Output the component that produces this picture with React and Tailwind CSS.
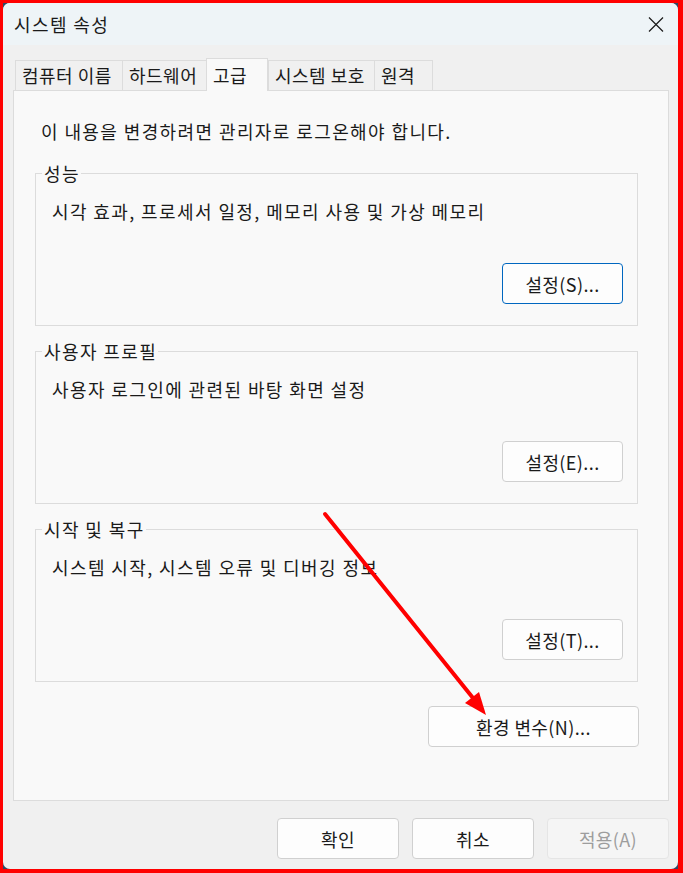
import React from "react";

const font = { fontFamily: '"Noto Sans CJK KR", "Noto Sans", sans-serif' };

const tabs = [
  { label: "컴퓨터 이름", w: "w-[107px]" },
  { label: "하드웨어", w: "w-[84px]" },
  { label: "고급", w: "w-[62px]", active: true },
  { label: "시스템 보호", w: "w-[106px]" },
  { label: "원격", w: "w-[59px]", last: true },
];

const groups = [
  { title: "성능", desc: "시각 효과, 프로세서 일정, 메모리 사용 및 가상 메모리", btn: "설정(S)...", focused: true },
  { title: "사용자 프로필", desc: "사용자 로그인에 관련된 바탕 화면 설정", btn: "설정(E)..." },
  { title: "시작 및 복구", desc: "시스템 시작, 시스템 오류 및 디버깅 정보", btn: "설정(T)..." },
];

const Button = ({ children, className = "", focused, disabled }) => (
  <button
    type="button"
    className={
      "h-[41px] rounded-[4px] border text-[18px] leading-none tracking-[0.4px] flex items-center justify-center " +
      (disabled
        ? "bg-[#f5f5f5] border-[#e5e5e5] text-[#9d9d9d] "
        : focused
        ? "bg-[#fdfdfd] border-[#0067c0] text-[#1a1a1a] "
        : "bg-[#fdfdfd] border-[#d0d0d0] text-[#1a1a1a] ") +
      className
    }
  >
    {children}
  </button>
);

const GroupBox = ({ title, desc, btn, focused }) => (
  <div className="relative w-[603px] h-[153px] border border-[#dcdcdc] flex flex-col">
    <span className="absolute -top-[14px] left-[6px] pl-[2px] pr-[1px] bg-[#f9f9f9] text-[18px] leading-[26px] tracking-[1.4px]">
      {title}
    </span>
    <p className="pl-[16px] pt-[24px] text-[18px] leading-[26px] tracking-[1.4px]">{desc}</p>
    <Button focused={focused} className="w-[121px] self-end mt-auto mb-[21px] mr-[14px]">
      {btn}
    </Button>
  </div>
);

export default function App() {
  return (
    <div
      className="relative w-[683px] h-[873px] border-[#ff0000] border-l-[3px] border-t-[3px] border-r-[5px] border-b-[4px] bg-[#2f4a66] text-[#1a1a1a]"
      style={font}
    >
      <div className="h-full flex flex-col bg-[#f0f0f0] rounded-[7px] overflow-hidden">
        {/* title bar */}
        <div className="h-[42px] shrink-0 bg-[#eef4f7] flex items-center justify-between pl-[11px] pr-[14px]">
          <span className="text-[18px] leading-none tracking-[1.4px]">시스템 속성</span>
          <svg width="16" height="15" viewBox="0 0 16 15" className="text-[#1a1a1a]">
            <path d="M1 0.5 L15 14.5 M15 0.5 L1 14.5" stroke="currentColor" strokeWidth="1.2" fill="none" />
          </svg>
        </div>

        {/* tabs */}
        <div className="mt-[13px] ml-[12px] flex items-end -mb-[1px] relative z-10">
          {tabs.map((t) =>
            t.active ? (
              <div
                key={t.label}
                className={`${t.w} h-[33px] bg-[#f9f9f9] border-t border-x border-[#dcdcdc] pl-[6px] flex items-center text-[18px] tracking-[0.5px]`}
              >
                {t.label}
              </div>
            ) : (
              <div
                key={t.label}
                className={`${t.w} h-[31px] bg-[#f0f0f0] border-t border-b border-l ${t.last ? "border-r" : ""} border-[#dcdcdc] pl-[6px] flex items-center text-[18px] tracking-[0.5px]`}
              >
                {t.label}
              </div>
            )
          )}
        </div>

        {/* panel */}
        <div className="ml-[10px] w-[656px] h-[711px] shrink-0 bg-[#f9f9f9] border border-[#dcdcdc] flex flex-col">
          <p className="pl-[27px] pt-[27px] text-[18px] leading-[26px] tracking-[1.4px]">
            이 내용을 변경하려면 관리자로 로그온해야 합니다.
          </p>
          <div className="ml-[21px] mt-[29px] flex flex-col gap-[25px]">
            {groups.map((g) => (
              <GroupBox key={g.title} {...g} />
            ))}
          </div>
          <Button className="w-[211px] ml-[414px] mt-[24px]">환경 변수(N)...</Button>
        </div>

        {/* dialog buttons */}
        <div className="mt-[17px] flex justify-end gap-[13px] pr-[9px]">
          <Button className="w-[122px]">확인</Button>
          <Button className="w-[122px]">취소</Button>
          <Button className="w-[122px]" disabled>
            적용(A)
          </Button>
        </div>
      </div>

      {/* annotation arrow */}
      <svg className="absolute -left-[3px] -top-[3px] pointer-events-none" width="683" height="873">
        <line x1="325" y1="514" x2="473" y2="698" stroke="#ff0000" strokeWidth="4" strokeLinecap="round" />
        <polygon points="486,715 465,703 479,692" fill="#ff0000" />
      </svg>
    </div>
  );
}
